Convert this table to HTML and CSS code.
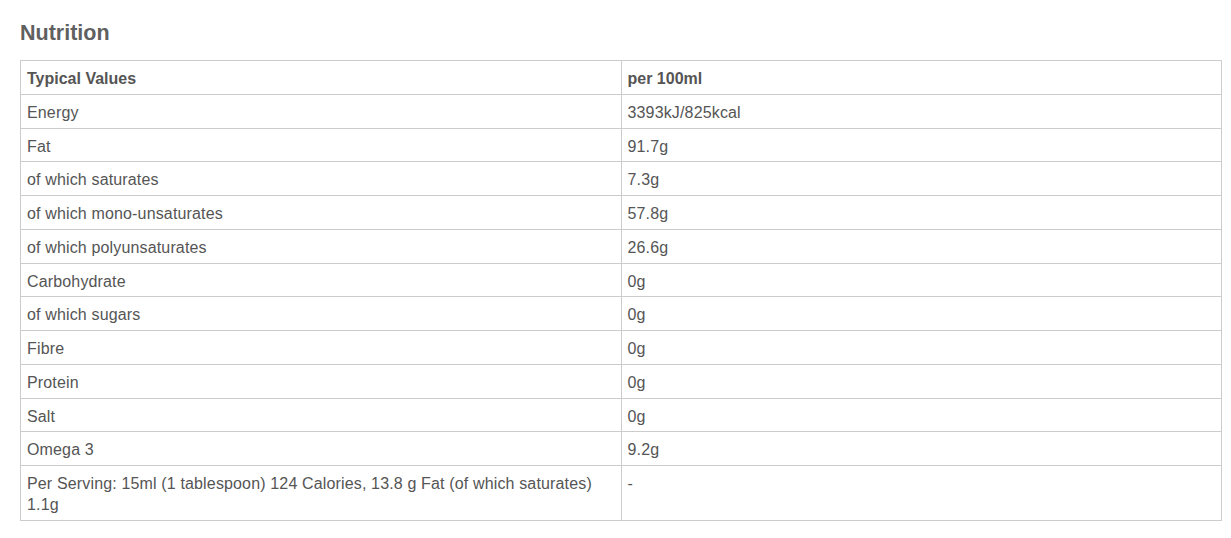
FILE: index.html
```html
<!DOCTYPE html>
<html>
<head>
<meta charset="utf-8">
<link rel="stylesheet" href="styles.css">
</head>
<body>
<div class="page">
  <h2 class="title">Nutrition</h2>
  <table class="nutri">
    <thead>
      <tr><th>Typical Values</th><th>per 100ml</th></tr>
    </thead>
    <tbody>
      <tr><td>Energy</td><td>3393kJ/825kcal</td></tr>
      <tr><td>Fat</td><td>91.7g</td></tr>
      <tr><td>of which saturates</td><td>7.3g</td></tr>
      <tr><td>of which mono-unsaturates</td><td>57.8g</td></tr>
      <tr><td>of which polyunsaturates</td><td>26.6g</td></tr>
      <tr><td>Carbohydrate</td><td>0g</td></tr>
      <tr><td>of which sugars</td><td>0g</td></tr>
      <tr><td>Fibre</td><td>0g</td></tr>
      <tr><td>Protein</td><td>0g</td></tr>
      <tr><td>Salt</td><td>0g</td></tr>
      <tr><td>Omega 3</td><td>9.2g</td></tr>
      <tr><td>Per Serving: 15ml (1 tablespoon) 124 Calories, 13.8 g Fat (of which saturates) 1.1g</td><td>-</td></tr>
    </tbody>
  </table>
</div>
</body>
</html>
```
FILE: styles.css
```css
html, body {
  margin: 0;
  padding: 0;
  background: #ffffff;
}
.page {
  padding: 20px 9px 0 20px;
  font-family: "Liberation Sans", Arial, sans-serif;
  color: #555555;
}
.title {
  margin: 0 0 14px 0;
  font-size: 21.5px;
  line-height: 26px;
  font-weight: bold;
  color: #606060;
}
.nutri {
  width: 1202px;
  border-collapse: collapse;
  table-layout: fixed;
  font-size: 16px;
  line-height: 21px;
}
.nutri th,
.nutri td {
  border: 1px solid #cccccc;
  padding: 7px 6px 4.75px 6px;
  text-align: left;
  vertical-align: top;
  width: 50%;
}
.nutri td {
  letter-spacing: 0.15px;
}
.nutri th {
  font-weight: bold;
}
```
